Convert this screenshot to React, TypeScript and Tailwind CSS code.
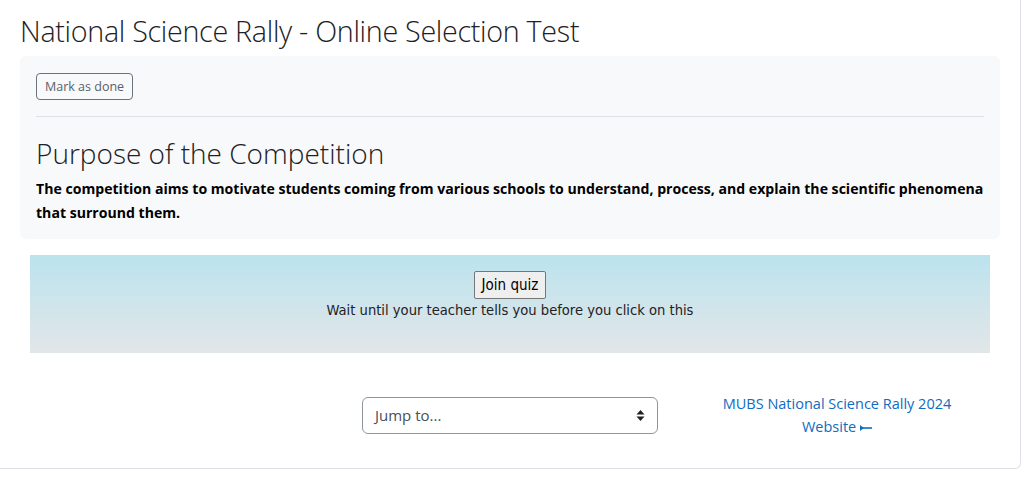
export default function App() {
  return (
    <div className="min-h-[494px] bg-white font-['Open_Sans',sans-serif] text-[#1d2125]">
      <div className="ml-[-10px] mt-[-10px] w-[1031px] rounded-br-md border-r border-b border-[#dee2e6] pl-[30px] pr-[20px] pt-[23px] pb-[30px]">
        <h1 className="text-[28.7px] font-light leading-[36px] tracking-[-0.3px] text-[#1d2125]">
          National Science Rally - Online Selection Test
        </h1>

        {/* Activity description */}
        <div className="mt-[7px] rounded-md bg-[#f8f9fa] px-4 pt-[17px] pb-[14px]">
          <button className="rounded border border-[#6a737b] px-[8px] py-[4px] text-[12.5px] leading-[17px] text-[#5a6169]">
            Mark as done
          </button>
          <hr className="mt-[16px] border-t border-[#dee2e6]" />
          <h2 className="mt-[19px] text-[28px] font-light leading-[34px] text-[#1d2125]">
            Purpose of the Competition
          </h2>
          <p className="mt-[7px] text-[14.1px] font-bold leading-[24px] text-black">
            The competition aims to motivate students coming from various schools to understand, process, and explain the scientific phenomena that surround them.
          </p>
        </div>

        {/* Quiz join */}
        <div className="mx-[10px] mt-[16px] flex h-[98px] flex-col items-center bg-gradient-to-b from-[#bbe3ee] to-[#e2e6e8] pt-[16px] font-['DejaVu_Sans_Condensed',sans-serif]">
          <button className="rounded-[2px] border border-[#767676] bg-[#efefef] px-[7px] text-[15px] leading-[26px] text-black">
            Join quiz
          </button>
          <p className="mt-[1px] text-[14.6px] leading-[20px] text-[#1d2125]">
            Wait until your teacher tells you before you click on this
          </p>
        </div>

        {/* Activity navigation */}
        <div className="mt-[39px] flex items-center">
          <div className="ml-[342px] flex h-[37px] w-[296px] items-center justify-between rounded-md border border-[#8f959e] bg-white pl-[12px] pr-[12px] text-[15px] text-[#495057]">
            <span>Jump to...</span>
            <svg width="9" height="13" viewBox="0 0 9 13" className="text-[#1d2125]">
              <path d="M0.5 5.5 L4.5 1 L8.5 5.5 Z" fill="currentColor" />
              <path d="M0.5 7.5 L4.5 12 L8.5 7.5 Z" fill="currentColor" />
            </svg>
          </div>
          <a className="ml-[59px] w-[240px] text-center text-[14.5px] leading-[23px] text-[#0f6cbf]">
            MUBS National Science Rally 2024 Website{" "}
            <span className="inline-block align-middle">
              <svg width="12" height="8" viewBox="0 0 12 8">
                <path d="M0 1 L4 4 L0 7 Z" fill="currentColor" />
                <rect x="3" y="3.2" width="9" height="1.6" fill="currentColor" />
              </svg>
            </span>
          </a>
        </div>
      </div>
    </div>
  );
}
